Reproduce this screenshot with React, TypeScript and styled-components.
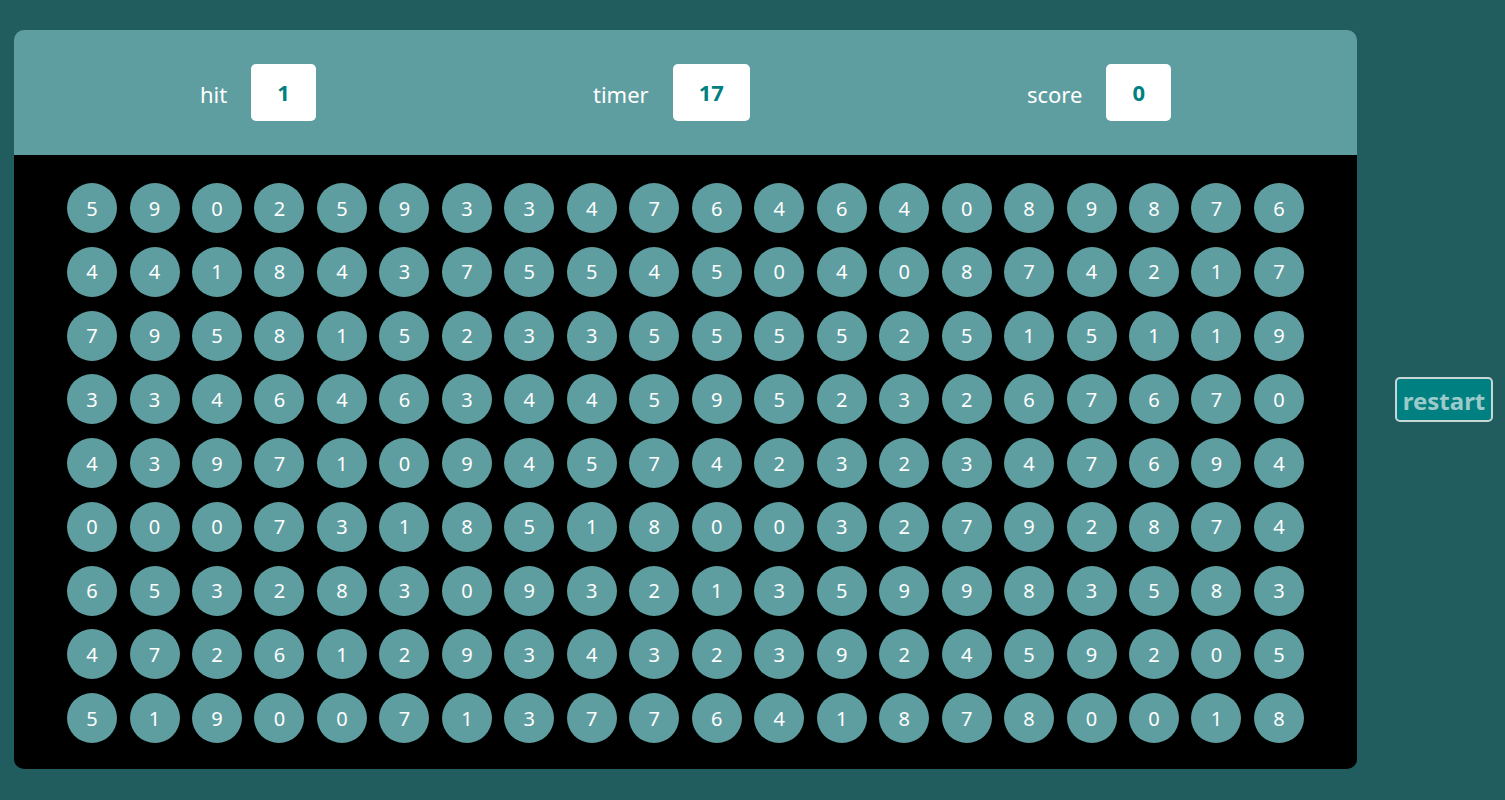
import React from "react";
import styled, { createGlobalStyle } from "styled-components";

const GlobalStyle = createGlobalStyle`
  html, body {
    margin: 0;
    padding: 0;
    background: #215d5f;
    font-family: "Noto Sans", "DejaVu Sans", sans-serif;
  }
  * { box-sizing: border-box; }
`;

const Page = styled.div`
  display: flex;
  align-items: center;
  gap: 38px;
  padding: 30px 0 31px 14px;
  min-height: 800px;
  background: #215d5f;
`;

const Panel = styled.div`
  width: 1343px;
  border-radius: 10px;
  overflow: hidden;
  display: flex;
  flex-direction: column;
`;

const Header = styled.div`
  height: 125px;
  background: #5f9ea0;
  display: flex;
  align-items: center;
  justify-content: space-between;
  padding: 0 186px;
`;

const Stat = styled.div`
  display: flex;
  align-items: center;
  gap: 24px;
`;

const Label = styled.span`
  color: #ffffff;
  font-size: 22px;
  line-height: 1;
  padding-top: 3px;
`;

const Value = styled.span`
  display: inline-block;
  background: #ffffff;
  border-radius: 5px;
  height: 57px;
  line-height: 57px;
  padding: 0 26px;
  min-width: 64px;
  text-align: center;
  color: #008080;
  font-weight: 700;
  font-size: 22px;
`;

const Board = styled.div`
  background: #000000;
  display: grid;
  grid-template-columns: repeat(20, 50px);
  grid-auto-rows: 50px;
  column-gap: 12.47px;
  row-gap: 13.75px;
  justify-content: center;
  padding: 28px 0 26px;
`;

const Bubble = styled.div`
  width: 50px;
  height: 50px;
  border-radius: 50%;
  background: #5f9ea0;
  color: #ffffff;
  font-size: 20px;
  display: flex;
  align-items: center;
  justify-content: center;
  user-select: none;
`;

const RestartButton = styled.button`
  width: 98px;
  height: 45px;
  padding: 2px 0 0;
  border: 2px solid #c9d6d6;
  border-radius: 5px;
  background: #008080;
  color: #9ccaca;
  font-family: "Noto Sans", "DejaVu Sans", sans-serif;
  font-weight: 700;
  font-size: 24px;
  line-height: 1;
  cursor: pointer;
`;

const rows = [
  "59025933476464089876",
  "44184375545040874217",
  "79581523355552515119",
  "33464634459523267670",
  "43971094574232347694",
  "00073185180032792874",
  "65328309321359983583",
  "47261293432392459205",
  "51900713776418780018",
];

export default function App() {
  return (
    <>
      <GlobalStyle />
      <Page>
        <Panel>
          <Header>
            <Stat>
              <Label>hit</Label>
              <Value>1</Value>
            </Stat>
            <Stat>
              <Label>timer</Label>
              <Value>17</Value>
            </Stat>
            <Stat>
              <Label>score</Label>
              <Value>0</Value>
            </Stat>
          </Header>
          <Board>
            {rows.flatMap((row, r) =>
              row.split("").map((d, c) => <Bubble key={`${r}-${c}`}>{d}</Bubble>)
            )}
          </Board>
        </Panel>
        <RestartButton>restart</RestartButton>
      </Page>
    </>
  );
}
